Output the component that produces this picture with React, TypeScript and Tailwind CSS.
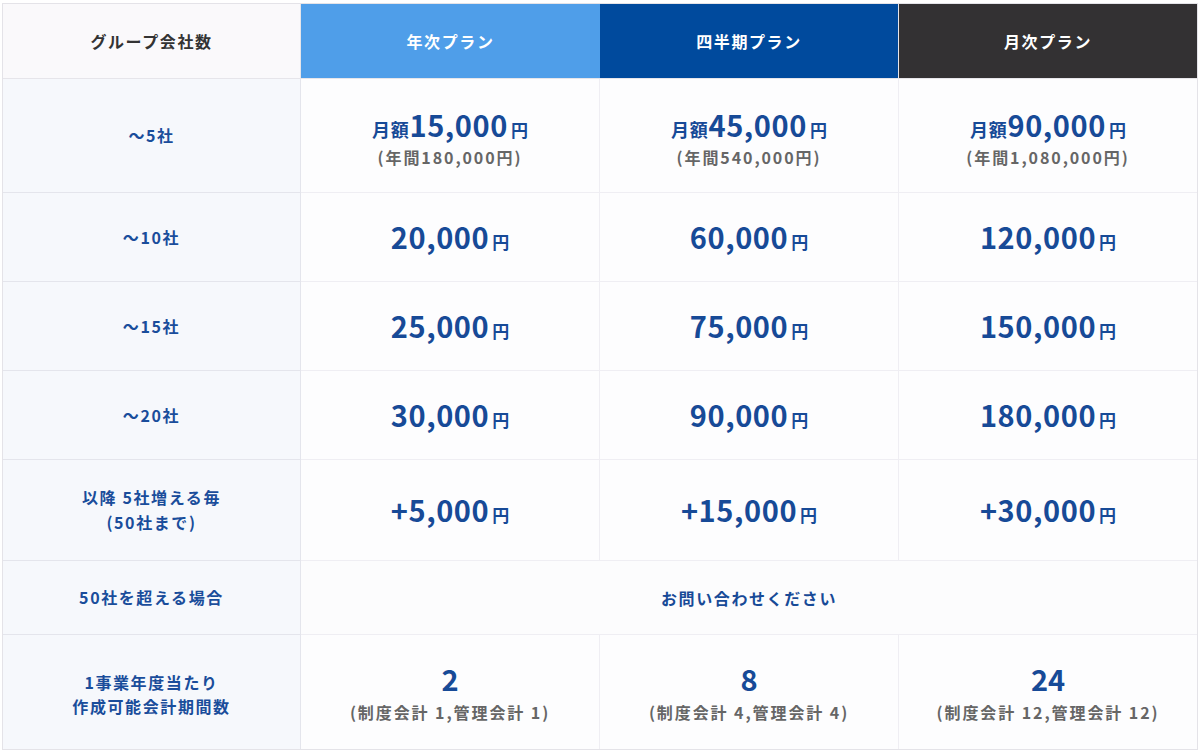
const font = { fontFamily: '"Noto Sans CJK JP", "Noto Sans", sans-serif' };

type Row = { label: React.ReactNode; h: string; cells: React.ReactNode[] };

function Price({ value }: { value: string }) {
  return (
    <span className="text-[#174a97] font-bold mt-[3px]">
      <span className="text-[29px] leading-none tracking-[0.02em]">{value}</span>
      <span className="text-[17px] ml-[3px]">円</span>
    </span>
  );
}

function Monthly({ value, yearly }: { value: string; yearly: string }) {
  return (
    <div className="flex flex-col items-center gap-[2px] mt-[7px]">
      <span className="text-[#174a97] font-bold">
        <span className="text-[18px] tracking-[0.04em]">月額</span>
        <span className="text-[29px] leading-none tracking-[0.02em]">{value}</span>
        <span className="text-[17px] ml-[3px]">円</span>
      </span>
      <span className="text-[16px] font-bold text-[#666] tracking-[0.12em]">(年間{yearly}円)</span>
    </div>
  );
}

function Periods({ n, detail }: { n: string; detail: string }) {
  return (
    <div className="flex flex-col items-center gap-[3px]">
      <span className="text-[29px] font-bold text-[#174a97] leading-tight">{n}</span>
      <span className="text-[16px] font-bold text-[#666] tracking-[0.12em]">{detail}</span>
    </div>
  );
}

const rows: Row[] = [
  {
    label: "〜5社",
    h: "h-[114px]",
    cells: [
      <Monthly value="15,000" yearly="180,000" />,
      <Monthly value="45,000" yearly="540,000" />,
      <Monthly value="90,000" yearly="1,080,000" />,
    ],
  },
  { label: "〜10社", h: "h-[89px]", cells: [<Price value="20,000" />, <Price value="60,000" />, <Price value="120,000" />] },
  { label: "〜15社", h: "h-[89px]", cells: [<Price value="25,000" />, <Price value="75,000" />, <Price value="150,000" />] },
  { label: "〜20社", h: "h-[89px]", cells: [<Price value="30,000" />, <Price value="90,000" />, <Price value="180,000" />] },
  {
    label: (
      <>
        以降 5社増える毎
        <br />
        (50社まで)
      </>
    ),
    h: "h-[101px]",
    cells: [<Price value="+5,000" />, <Price value="+15,000" />, <Price value="+30,000" />],
  },
];

const labelCls =
  "flex items-center justify-center text-center bg-[#f6f8fc] border-r border-[#e4e5ec] text-[16px] tracking-[0.1em] font-bold text-[#1a4d9b] leading-[25px]";
const headCls = "h-[75px] flex items-center justify-center border-b border-[#e6e5ea] text-[16px] tracking-[0.1em] font-bold";

export default function App() {
  return (
    <div className="w-[1200px] h-[750px] bg-white pt-[3px] pl-[2px]" style={font}>
      <div className="w-[1196px] border border-[#e4e3e8] grid grid-cols-[298px_299px_299px_1fr]">
        {/* header */}
        <div className={`${headCls} bg-[#faf9fb] border-r text-[#333]`}>グループ会社数</div>
        <div className={`${headCls} bg-[#4f9ee9] text-white`}>年次プラン</div>
        <div className={`${headCls} bg-[#004a9d] border-r text-white`}>四半期プラン</div>
        <div className={`${headCls} bg-[#333133] text-white`}>月次プラン</div>

        {rows.map((r, i) => (
          <div key={i} className="contents">
            <div className={`${r.h} ${labelCls} border-b`}>
              <span>{r.label}</span>
            </div>
            {r.cells.map((c, j) => (
              <div
                key={j}
                className={`${r.h} flex items-center justify-center bg-[#fdfdfe] border-b border-[#efeef3] ${j < 2 ? "border-r" : ""}`}
              >
                {c}
              </div>
            ))}
          </div>
        ))}

        <div className={`h-[74px] ${labelCls} border-b`}>50社を超える場合</div>
        <div className="col-span-3 h-[74px] flex items-center justify-center bg-[#fcfcfd] border-b border-[#efeef3] text-[16px] tracking-[0.1em] font-bold text-[#174a97]">
          お問い合わせください
        </div>

        <div className={`h-[114px] ${labelCls}`}>
          <span className="leading-[24px] mt-[4px]">
            1事業年度当たり
            <br />
            作成可能会計期間数
          </span>
        </div>
        <div className="h-[114px] flex items-center justify-center bg-[#fdfdfe] border-r border-[#efeef3]">
          <Periods n="2" detail="(制度会計 1,管理会計 1)" />
        </div>
        <div className="h-[114px] flex items-center justify-center bg-[#fdfdfe] border-r border-[#efeef3]">
          <Periods n="8" detail="(制度会計 4,管理会計 4)" />
        </div>
        <div className="h-[114px] flex items-center justify-center bg-[#fdfdfe]">
          <Periods n="24" detail="(制度会計 12,管理会計 12)" />
        </div>
      </div>
    </div>
  );
}
